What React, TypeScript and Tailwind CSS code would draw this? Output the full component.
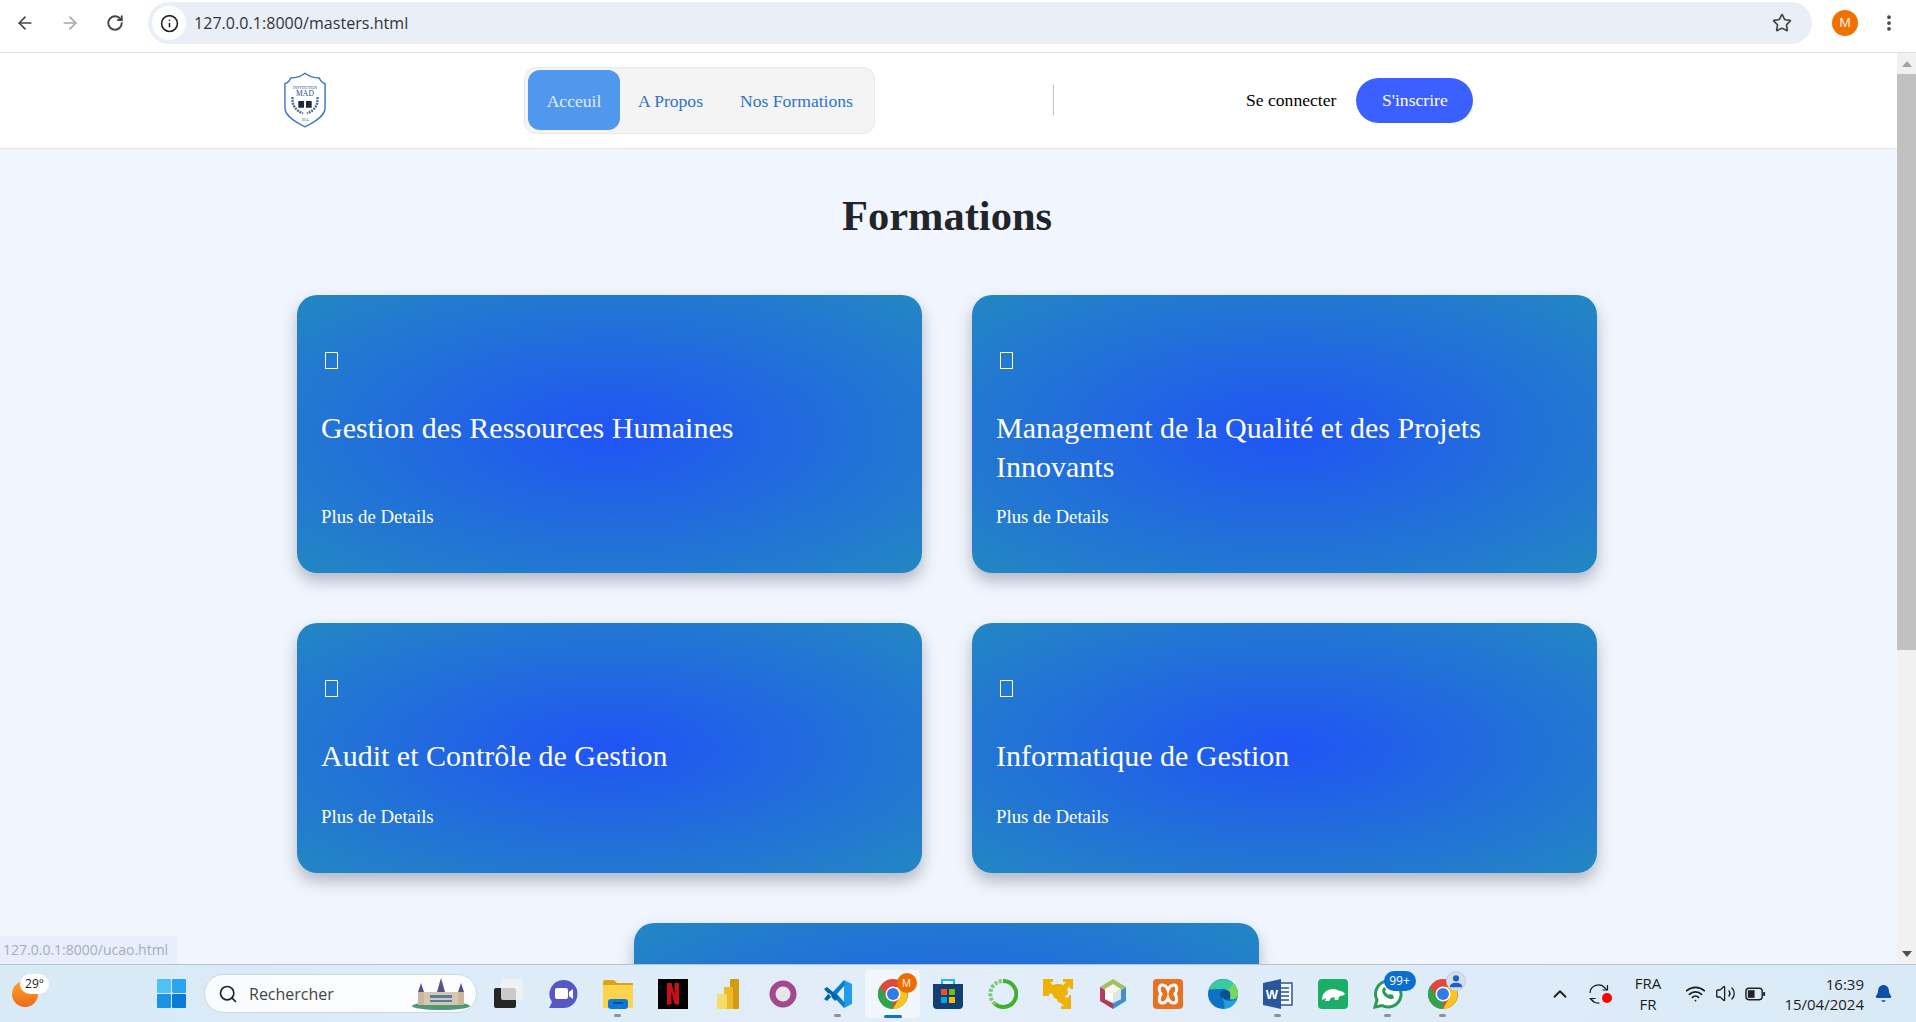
import React from "react";
import { ArrowLeft, ArrowRight, RotateCw, Info, Star, MoreVertical, Search, ChevronUp, Wifi, Volume2, Bell } from "lucide-react";

const cardStyle = "rounded-[20px] bg-[radial-gradient(#2054f5,#2387c2)] shadow-[0_8px_16px_rgba(40,50,70,0.32)]";

const Card = ({ title }: { title: string }) => (
  <div className={`flex flex-col pl-[24px] pr-6 pt-[57px] pb-[45px] text-white ${cardStyle}`}>
    <div className="ml-[4px] h-[17px] w-[13px] shrink-0 border border-white"></div>
    <h2 className="mt-[39px] text-[30px] leading-[39px]">{title}</h2>
    <a className="mt-auto text-[18.8px] leading-[22px]">Plus de Details</a>
  </div>
);

const Slot = ({ children, active = false, dot = false }: { children: React.ReactNode; active?: boolean; dot?: boolean }) => (
  <div className={`relative flex h-[48px] w-[55px] shrink-0 items-center justify-center ${active ? "rounded bg-white/50" : ""}`}>
    {children}
    {dot && <span className="absolute bottom-[1px] left-[24px] h-[3px] w-[7px] rounded-full bg-[#8a929b]"></span>}
    {active && <span className="absolute bottom-0 left-[19px] h-[3px] w-[18px] rounded-full bg-[#0a73d8]"></span>}
  </div>
);

const ChromeIcon = () => (
  <svg viewBox="0 0 32 32" className="h-[32px] w-[32px]">
    <circle cx="16" cy="16" r="15" fill="#dd4a3c" />
    <path d="M16 16 L3 23.5 A15 15 0 0 0 16 31 Z" fill="#2ea44f" />
    <path d="M3 8.5 A15 15 0 0 0 3 23.5 L10 19 Z" fill="#2ea44f" />
    <path d="M16 9 H29 A15 15 0 0 1 16 31 L22 20 Z" fill="#f8c51c" />
    <circle cx="16" cy="16" r="7.5" fill="#fff" />
    <circle cx="16" cy="16" r="6" fill="#2f7be8" />
  </svg>
);

const taskbarIcons: { key: string; dot?: boolean; active?: boolean; node: React.ReactNode }[] = [
  {
    key: "taskview",
    node: (
      <svg viewBox="0 0 30 30" className="h-[30px] w-[30px]">
        <rect x="1" y="9" width="22" height="20" rx="2" fill="#262626" />
        <rect x="8" y="0" width="22" height="21" rx="2" fill="#f2f4f6" fillOpacity="0.8" />
      </svg>
    ),
  },
  {
    key: "meet",
    node: (
      <svg viewBox="0 0 30 30" className="h-[30px] w-[30px]">
        <path d="M15.500 1a14 14 0 0 1 0 28H1l3-6A14 14 0 0 1 15.500 1Z" fill="#5757c6" />
        <rect x="7" y="9" width="13" height="11" rx="2" fill="#fff" />
        <path d="M21 13l4-3v10l-4-3Z" fill="#fff" />
      </svg>
    ),
  },
  {
    key: "folder",
    dot: true,
    node: (
      <svg viewBox="0 0 30 30" className="h-[30px] w-[30px]">
        <path d="M0 3a2 2 0 0 1 2-2h9l3 3h16v6H0Z" fill="#d9a514" />
        <rect y="6" width="30" height="23" rx="1" fill="#fcd34d" />
        <rect x="5" y="20" width="20" height="10" rx="3" fill="#0f78d4" />
        <rect x="10" y="23" width="10" height="2" fill="#0a4f94" />
      </svg>
    ),
  },
  {
    key: "netflix",
    node: (
      <svg viewBox="0 0 30 30" className="h-[30px] w-[30px]">
        <rect width="30" height="30" fill="#000" />
        <path d="M9 4h4.500l3 12V4H21v22l-4.500-1-3-12v12L9 26Z" fill="#c8101c" />
      </svg>
    ),
  },
  {
    key: "powerbi",
    node: (
      <svg viewBox="0 0 22 30" className="h-[30px] w-[22px]">
        <rect x="13" y="0" width="9" height="30" rx="1" fill="#d39a12" />
        <rect x="7" y="8" width="9" height="22" fill="#eeb92b" />
        <rect x="0" y="15" width="10" height="15" rx="1" fill="#f8dc6a" />
      </svg>
    ),
  },
  {
    key: "ring",
    node: (
      <svg viewBox="0 0 28 30" className="h-[30px] w-[28px]">
        <circle cx="14" cy="16" r="13.500" fill="#e6e6e6" />
        <circle cx="14" cy="15" r="10.500" fill="none" stroke="#a2488f" strokeWidth="6" />
      </svg>
    ),
  },
  {
    key: "vscode",
    dot: true,
    node: (
      <svg viewBox="0 0 30 30" className="h-[30px] w-[30px]">
        <path d="M21 1l8 4v20l-8 4Z" fill="#1f9cf0" />
        <path d="M21 1 8 15l13 14 1-5-8-9 8-9Z" fill="#0a7fc9" />
        <path d="M1 10l3-2 12 10-4 4Zm0 10 3 2 5-5-3-3Z" fill="#0065a9" />
      </svg>
    ),
  },
  {
    key: "chrome",
    active: true,
    node: (
      <div className="relative mt-[1px]">
        <ChromeIcon />
        <span className="absolute -right-[8px] -top-[5px] flex h-[20px] w-[20px] items-center justify-center rounded-full bg-[#ee6c00] text-[10px] text-white">M</span>
      </div>
    ),
  },
  {
    key: "store",
    node: (
      <svg viewBox="0 0 30 30" className="h-[30px] w-[30px]">
        <path d="M9 5V1h12v4" fill="none" stroke="#27b4ea" strokeWidth="2" />
        <path d="M0 5h30v21a4 4 0 0 1-4 4H4a4 4 0 0 1-4-4Z" fill="#123f73" />
        <rect x="8" y="10" width="6" height="6" fill="#f25022" />
        <rect x="16" y="10" width="6" height="6" fill="#7fba00" />
        <rect x="8" y="18" width="6" height="6" fill="#00a4ef" />
        <rect x="16" y="18" width="6" height="6" fill="#ffb900" />
      </svg>
    ),
  },
  {
    key: "circle",
    node: (
      <svg viewBox="0 0 30 30" className="h-[30px] w-[30px]">
        <path d="M15 2a13 13 0 1 1-8 23" fill="none" stroke="#41b02e" strokeWidth="4" />
        <path d="M7 25A13 13 0 0 1 15 2" fill="none" stroke="#7ec86f" strokeWidth="4" strokeDasharray="3 1.500" />
      </svg>
    ),
  },
  {
    key: "vector",
    node: (
      <svg viewBox="0 0 30 30" className="h-[30px] w-[30px]" fill="#eeb205">
        <path d="M0 0h10v3H7l3 3 3-1h4l3 1 3-3h-3V0h10v10h-3V7l-3 3 1 3v2l-3 2 1 2 3-1v-2h2v14H18v-3h3l-3-3-3-1-1-3-3-1-1-3-2-2-2 1v2H0Z" />
      </svg>
    ),
  },
  {
    key: "cube",
    node: (
      <svg viewBox="0 0 28 30" className="h-[30px] w-[28px]">
        <path d="M14 0 27 8 14 15 1 8Z" fill="#a8bd5b" />
        <path d="M1 8v14l13 8V24L6 20v-9Z" fill="#b4395d" />
        <path d="M27 8v14l-13 8V24l8-4v-9Z" fill="#3f8fd3" />
        <path d="M14 5l8 5-8 5-8-5Z" fill="#f5f6f0" />
        <path d="M6 10l8 5v9l-8-4Z" fill="#fff" />
        <path d="M22 10l-8 5v9l8-4Z" fill="#dde5ea" />
      </svg>
    ),
  },
  {
    key: "xampp",
    node: (
      <svg viewBox="0 0 30 30" className="h-[30px] w-[30px]">
        <rect width="30" height="30" rx="4" fill="#ea7024" />
        <path d="M15 11c1-3 3-5 6-5s4 5 1 9c3 4 2 9-1 9s-5-2-6-5c-1 3-3 5-6 5s-4-5-1-9C5 11 6 6 9 6s5 2 6 5Z" fill="none" stroke="#fff" strokeWidth="3" />
      </svg>
    ),
  },
  {
    key: "edge",
    node: (
      <svg viewBox="0 0 30 30" className="h-[30px] w-[30px]">
        <circle cx="15" cy="15" r="15" fill="#0c72c4" />
        <path d="M1 11C3 3 10 0 15 0c9 0 15 7 15 15 0 5-5 6-8 5 2-6-3-11-9-10C8 10 3 10 1 11Z" fill="#3cc8a0" />
        <path d="M25 4c4 3 5 7 5 11 0 5-5 6-8 5 1-4-1-8-3-9 3-1 5-4 6-7Z" fill="#78d65e" />
        <path d="M12 16c0-4 5-6 9-4 2 2 1 6 1 8-4 1-9 1-10-4Z" fill="#0c4f94" />
        <path d="M14 17c2 6 9 6 15 3-2 6-8 10-14 10 4-2 0-8-1-13Z" fill="#1fa3e0" />
      </svg>
    ),
  },
  {
    key: "word",
    dot: true,
    node: (
      <svg viewBox="0 0 30 30" className="h-[30px] w-[30px]">
        <rect x="11" y="4" width="18" height="22" fill="#f4f7fb" stroke="#2b579a" strokeWidth="1.500" />
        <path d="M18 9h8M18 13h8M18 17h8M18 21h8" stroke="#2b579a" strokeWidth="1.500" />
        <path d="M0 4l18-4v30L0 26Z" fill="#2b579a" />
        <text x="9" y="20" textAnchor="middle" fontFamily="Liberation Sans" fontSize="13" fontWeight="700" fill="#fff">W</text>
      </svg>
    ),
  },
  {
    key: "bear",
    node: (
      <svg viewBox="0 0 30 30" className="h-[30px] w-[30px]">
        <rect width="30" height="30" rx="4" fill="#1aae66" />
        <path d="M4 21c0-7 5-11 11-11 3 0 5 1 7 2 2 0 4 1 5 3-1 1-3 2-5 2l-1 1-1 3h-3l-1-3-3 1-2 3H7l1-3Z" fill="#fff" />
      </svg>
    ),
  },
  {
    key: "whatsapp",
    dot: true,
    node: (
      <div className="relative">
        <svg viewBox="0 0 30 30" className="h-[30px] w-[30px]">
          <path d="M15 2a13 13 0 1 1-6 24.500L2 28l2-7A13 13 0 0 1 15 2Z" fill="#fff" stroke="#2c9a57" strokeWidth="3" />
          <path d="M10 9c-2 3 0 7 3 9s6 3 8 1l-1-3-3-1-1 1c-2-1-3-2-4-4l1-1-1-3Z" fill="#2c9a57" />
        </svg>
        <span className="absolute -right-[13px] -top-[8px] flex h-[20px] w-[32px] items-center justify-center rounded-full bg-[#0a6fd0] font-['Open_Sans'] text-[12px] text-white">99+</span>
      </div>
    ),
  },
  {
    key: "chrome2",
    dot: true,
    node: (
      <div className="relative mt-[1px]">
        <ChromeIcon />
        <span className="absolute -right-[7px] -top-[7px] flex h-[20px] w-[20px] items-center justify-center rounded-full border border-[#c3cbdb] bg-[#d6def0]">
          <svg viewBox="0 0 16 16" className="h-[14px] w-[14px]" fill="#1e60c8">
            <circle cx="8" cy="5" r="3.500" />
            <path d="M1 15c0-4 3-5 7-5s7 1 7 5Z" />
          </svg>
        </span>
      </div>
    ),
  },
];

export default function App() {
  return (
    <div className="flex h-[1022px] w-full flex-col overflow-hidden font-['Liberation_Serif',serif] bg-[#f1f6fe]">
      {/* browser bar */}
      <div className="flex h-[53px] shrink-0 items-start border-b border-[#dfe1e3] bg-white pt-[2px] font-['Open_Sans',sans-serif]">
        <div className="flex h-[42px] w-[148px] shrink-0 items-center pl-[15px] text-[#444746]">
          <ArrowLeft size={20} strokeWidth={2} />
          <ArrowRight size={20} strokeWidth={2} className="ml-[25px] text-[#a5a7a9]" />
          <RotateCw size={18} strokeWidth={2.500} className="ml-[26px]" />
        </div>
        <div className="flex h-[42px] w-[1664px] shrink-0 items-center rounded-full bg-[#eaeef7] pl-[4px] pr-[20px]">
          <div className="flex h-[34px] w-[34px] items-center justify-center rounded-full bg-white">
            <Info size={19} strokeWidth={2} className="text-[#222]" />
          </div>
          <span className="ml-[8px] text-base tracking-[0.05px] text-[#30343a]">127.0.0.1:8000/masters.html</span>
          <Star size={20} strokeWidth={2} className="ml-auto text-[#444746]" />
        </div>
        <div className="flex h-[42px] flex-1 items-center pl-[20px]">
          <span className="flex h-[26px] w-[26px] items-center justify-center rounded-full bg-[#f07000] text-[13px] text-white">M</span>
          <MoreVertical size={20} strokeWidth={2.500} className="ml-[21px] text-[#444746]" />
        </div>
      </div>

      <div className="flex min-h-0 flex-1">
        <div className="relative min-w-0 flex-1 overflow-hidden">
          {/* site header */}
          <header className="flex h-[96px] items-center border-b border-[#e5e9ef] bg-white pb-[1px] text-[17.6px]">
            <svg viewBox="0 0 46 58" className="ml-[283px] h-[58px] w-[44px] shrink-0">
              <path d="M23 1c4 3 9 5 15 5 1 3 3 5 6 6v25c0 8-9 14-21 20C11 51 2 45 2 37V12c3-1 5-3 6-6 6 0 11-2 15-5Z" fill="#fff" stroke="#3b78c4" strokeWidth="1.500" />
              <text x="23" y="17" textAnchor="middle" fontSize="4" fill="#234a80">INSTITUTION</text>
              <text x="23" y="25" textAnchor="middle" fontSize="8" fill="#234a80">MAD</text>
              <path d="M16 30h6v7h-6Zm8 0h6v7h-6Z" fill="#1f2937" />
              <path d="M10 26c-1 8 3 14 11 17M36 26c1 8-3 14-11 17" fill="none" stroke="#46688f" strokeWidth="2.500" strokeDasharray="2 1" />
              <text x="23" y="51" textAnchor="middle" fontSize="3.500" fill="#234a80">2014</text>
            </svg>
            <nav className="ml-[197px] flex h-[67px] w-[351px] shrink-0 items-center rounded-xl border border-[#e8e8e8] bg-[#f4f4f4] pl-[3px] text-[#2f72c8]">
              <a className="flex h-[60px] w-[92px] items-center justify-center rounded-xl bg-[#5098ee] pt-[2px] text-[#e1ecfb]">Acceuil</a>
              <a className="ml-[18px] pt-[2px]">A Propos</a>
              <a className="ml-[37px] pt-[2px]">Nos Formations</a>
            </nav>
            <div className="ml-[178px] h-[30px] w-px shrink-0 bg-[#c4c4c4]"></div>
            <a className="ml-[192px] text-black">Se connecter</a>
            <a className="ml-[20px] flex h-[45px] w-[117px] items-center justify-center rounded-full bg-[#3b60ff] text-white">S'inscrire</a>
          </header>

          {/* formations */}
          <main className="pl-[297px]">
            <h1 className="mt-[42px] w-[1300px] text-center text-[42.5px] font-bold leading-[50px] text-[#212529]">Formations</h1>
            <div className="mt-[54px] grid w-[1300px] grid-cols-2 grid-rows-[278px_250px_278px] gap-x-[50px] gap-y-[50px]">
              <Card title="Gestion des Ressources Humaines" />
              <Card title="Management de la Qualité et des Projets Innovants" />
              <Card title="Audit et Contrôle de Gestion" />
              <Card title="Informatique de Gestion" />
              {/* fifth card, its content is below the fold */}
              <div className={`col-span-2 ml-[337px] w-[625px] ${cardStyle}`}></div>
            </div>
          </main>

          <div className="absolute bottom-0 left-0 flex h-[28px] w-[177px] items-center rounded-tr bg-[#e8eefb] pl-[3px] font-['Open_Sans',sans-serif] text-sm text-[#a6adb8]">127.0.0.1:8000/ucao.html</div>
        </div>

        {/* scrollbar */}
        <div className="flex w-[19px] shrink-0 flex-col bg-[#f1f1f1]">
          <div className="flex h-[21px] items-center justify-center">
            <span className="h-0 w-0 border-x-[5px] border-b-[6px] border-x-transparent border-b-[#a3a3a3]"></span>
          </div>
          <div className="h-[576px] bg-[#c1c1c1]"></div>
          <div className="mt-auto flex h-[21px] items-center justify-center">
            <span className="h-0 w-0 border-x-[5px] border-t-[6px] border-x-transparent border-t-[#505050]"></span>
          </div>
        </div>
      </div>

      {/* windows taskbar */}
      <div className="relative flex h-[58px] shrink-0 items-center border-t border-[#b7c3ce] bg-gradient-to-r from-[#d8eaf6] via-[#e2eefa] to-[#d9eaf6] font-['Open_Sans',sans-serif] text-[#1c1c1c]">
        <div className="relative ml-[12px] h-[26px] w-[26px] shrink-0 rounded-full bg-gradient-to-b from-[#f9a825] to-[#f0651c]">
          <span className="absolute -top-[7px] left-[8px] flex h-[20px] w-[29px] items-center justify-center rounded-full bg-white text-xs">29°</span>
        </div>
        <svg viewBox="0 0 29 29" className="ml-[119px] h-[29px] w-[29px] shrink-0">
          <rect width="14" height="14" rx="1" fill="#4cc2f5" />
          <rect x="15" width="14" height="14" rx="1" fill="#2aa5ee" />
          <rect y="15" width="14" height="14" rx="1" fill="#1a92e6" />
          <rect x="15" y="15" width="14" height="14" rx="1" fill="#0a7ad8" />
        </svg>
        <div className="ml-[18px] flex h-[39px] w-[273px] shrink-0 items-center rounded-full border border-[#cdd7df] bg-white/85 pl-[13px] pr-[6px] text-base text-[#444]">
          <Search size={20} strokeWidth={2} className="text-[#222]" />
          <span className="ml-[11px]">Rechercher</span>
          <svg viewBox="0 0 58 32" className="ml-auto h-[32px] w-[58px]">
            <ellipse cx="29" cy="28" rx="29" ry="4" fill="#4f9a76" />
            <rect x="12" y="14" width="34" height="13" fill="#d8c7ae" />
            <path d="M25 14 29 0l4 14ZM6 14l3-9 3 9Zm40 0 3-9 3 9Z" fill="#5d4f85" />
            <rect x="6" y="14" width="6" height="13" fill="#c9b79c" />
            <rect x="46" y="14" width="6" height="13" fill="#c9b79c" />
            <path d="M18 17h22v3H18Zm0 5h22v2H18Z" fill="#4f7fa8" />
          </svg>
        </div>
        <div className="ml-[3px] flex shrink-0 items-center">
          {taskbarIcons.map((i) => (
            <Slot key={i.key} dot={i.dot} active={i.active}>
              {i.node}
            </Slot>
          ))}
        </div>
        {/* tray */}
        <ChevronUp size={22} strokeWidth={2} className="ml-[79px] shrink-0" />
        <div className="relative ml-[17px] shrink-0">
          <svg viewBox="0 0 22 22" className="h-[22px] w-[22px]" fill="none" stroke="#1c1c1c" strokeWidth="1.200">
            <path d="M2 10a8.500 8.500 0 0 1 15-5l2 2" />
            <path d="M19.500 2v5h-5" />
            <path d="M6 19 2.500 15.500h5" />
            <path d="M2.500 15.500c2 3 5 5 9 4.500" />
          </svg>
          <span className="absolute bottom-[2px] right-[-2px] h-[10px] w-[10px] rounded-full bg-[#f00]"></span>
        </div>
        <div className="ml-[24px] flex w-[28px] shrink-0 flex-col items-center text-[15px] leading-[21px]">
          <span>FRA</span>
          <span>FR</span>
        </div>
        <Wifi size={21} strokeWidth={2} className="ml-[23px] shrink-0" />
        <Volume2 size={21} strokeWidth={1.500} className="ml-[9px] shrink-0" />
        <svg viewBox="0 0 22 14" className="ml-[9px] h-[14px] w-[21px] shrink-0">
          <rect x="1" y="1" width="17" height="12" rx="3" fill="none" stroke="#222" strokeWidth="1.500" />
          <rect x="3" y="3" width="7" height="8" fill="#222" />
          <rect x="19" y="5" width="2" height="4" fill="#222" />
        </svg>
        <div className="ml-[20px] flex w-[78px] shrink-0 flex-col items-end text-[15px] leading-[20px]">
          <span>16:39</span>
          <span>15/04/2024</span>
        </div>
        <Bell size={19} fill="#0b4fa8" strokeWidth={1.500} className="ml-[10px] shrink-0 text-[#0b4fa8]" />
      </div>
    </div>
  );
}
